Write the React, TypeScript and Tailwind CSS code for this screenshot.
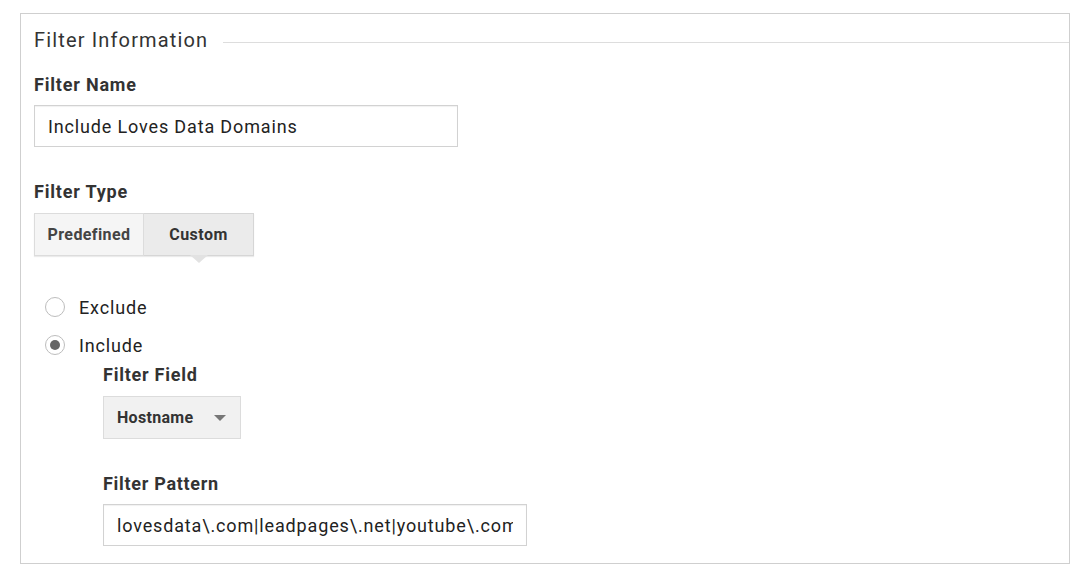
import React from "react";

export default function App() {
  return (
    <div className="w-[1087px] h-[578px] bg-white pt-[13px] pl-[20px]" style={{ fontFamily: "Roboto, 'Liberation Sans', sans-serif" }}>
      <div className="w-[1050px] h-[551px] border border-[#cfcfcf] pl-[13px] pt-[14px] flex flex-col items-start">
        {/* Legend */}
        <div className="flex items-start w-full">
          <div className="text-[20px] leading-[24px] tracking-[1.15px] text-[#333] whitespace-nowrap">Filter Information</div>
          <div className="flex-1 h-px bg-[#dddddd] mt-[14px] ml-[15px]" />
        </div>

        <div className="mt-[22px] text-[18px] leading-[22px] tracking-[0.8px] font-bold text-[#333]">Filter Name</div>
        <div className="mt-[9px] w-[424px] h-[42px] border border-[#d2d2d2] shadow-[inset_0_1px_1px_rgba(0,0,0,0.06)] flex items-center pl-[13px] text-[18px] tracking-[0.85px] text-[#222]">
          Include Loves Data Domains
        </div>

        <div className="mt-[34px] text-[18px] leading-[22px] tracking-[0.8px] font-bold text-[#333]">Filter Type</div>
        <div className="mt-[10px] flex shadow-[0_1px_1px_rgba(0,0,0,0.08)]">
          <div className="w-[110px] h-[43px] border border-[#dcdcdc] bg-[#f5f5f5] flex items-center justify-center text-[16px] tracking-[0.4px] font-bold text-[#444]">
            Predefined
          </div>
          <div className="relative w-[110px] h-[43px] border border-l-0 border-[#d6d6d6] bg-[#ebebeb] flex items-center justify-center text-[16px] tracking-[0.45px] font-bold text-[#333]">
            Custom
            <div className="absolute top-full left-1/2 -translate-x-1/2 w-0 h-0 border-l-[9px] border-r-[9px] border-t-[8px] border-l-transparent border-r-transparent border-t-[#e2e2e2]" />
          </div>
        </div>

        <div className="mt-[32px] h-[38px] flex items-center pl-[11px]">
          <div className="w-[20px] h-[20px] rounded-full border border-[#bdbdbd] bg-white" />
          <div className="ml-[14px] text-[18px] tracking-[0.85px] text-[#222]">Exclude</div>
        </div>
        <div className="h-[38px] flex items-center pl-[11px]">
          <div className="w-[20px] h-[20px] rounded-full border border-[#bdbdbd] bg-white flex items-center justify-center">
            <div className="w-[10px] h-[10px] rounded-full bg-[#666]" />
          </div>
          <div className="ml-[14px] text-[18px] tracking-[0.85px] text-[#222]">Include</div>
        </div>

        <div className="ml-[69px] flex flex-col items-start">
          <div className="text-[18px] leading-[22px] tracking-[0.75px] font-bold text-[#333]">Filter Field</div>
          <div className="mt-[10px] w-[138px] h-[43px] border border-[#dcdcdc] bg-[#f1f1f1] flex items-center pl-[13px] text-[16px] tracking-[0.3px] font-bold text-[#333]">
            <span>Hostname</span>
            <svg className="ml-[21px]" width="12" height="6" viewBox="0 0 12 6">
              <path d="M0 0 L12 0 L6 6 Z" fill="#777" />
            </svg>
          </div>

          <div className="mt-[34px] text-[18px] leading-[22px] tracking-[0.7px] font-bold text-[#333]">Filter Pattern</div>
          <div className="mt-[9px] w-[424px] h-[42px] border border-[#d2d2d2] shadow-[inset_0_1px_1px_rgba(0,0,0,0.06)] flex items-center pl-[13px] pr-[13px] text-[18px] tracking-[0.85px] text-[#222] whitespace-nowrap">
            <div className="overflow-hidden">lovesdata\.com|leadpages\.net|youtube\.com</div>
          </div>
        </div>
      </div>
    </div>
  );
}
